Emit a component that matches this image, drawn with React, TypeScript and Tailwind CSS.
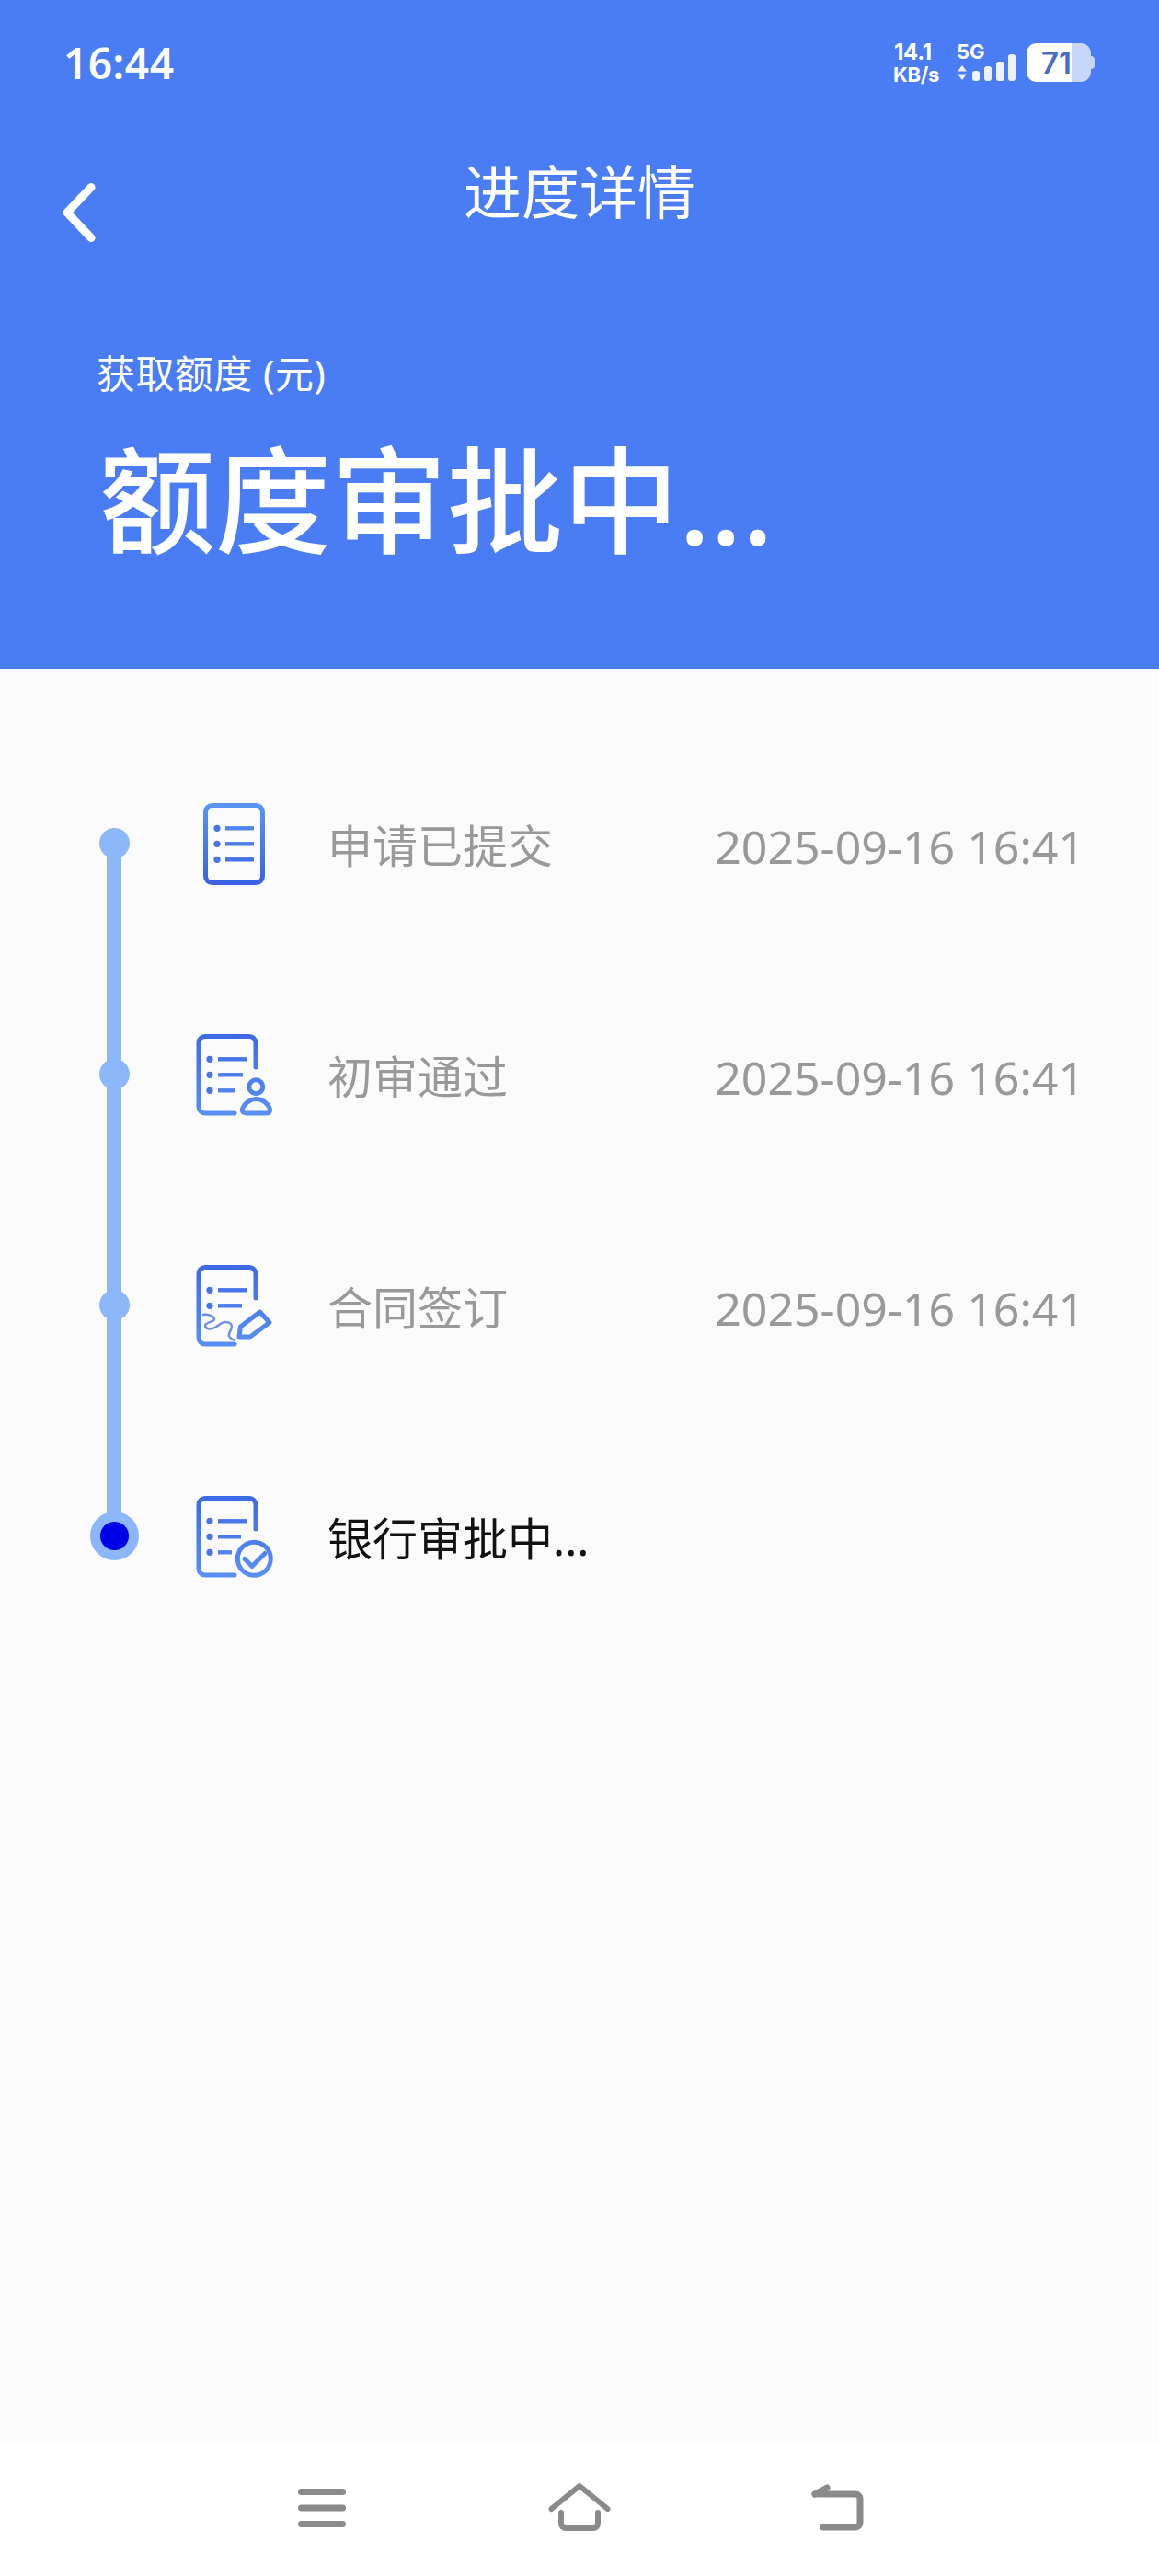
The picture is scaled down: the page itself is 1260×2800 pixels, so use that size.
const steps = [
  { name: "申请已提交", time: "2025-09-16 16:41", icon: "list" },
  { name: "初审通过", time: "2025-09-16 16:41", icon: "person" },
  { name: "合同签订", time: "2025-09-16 16:41", icon: "sign" },
  { name: "银行审批中...", time: "", icon: "check" },
];

function DocIcon({ kind }: { kind: string }) {
  const id = `doc-${kind}`;
  const flip = kind === "list";
  const stroke = `url(#${id})`;
  const lineEnds = kind === "person" ? [58, 53, 45] : kind === "sign" ? [57, 52] : kind === "check" ? [57, 51, 41] : [65, 65, 65];
  const dotX = flip ? 25 : 17;
  const lineX = flip ? 34 : 26;
  return (
    <svg width="90" height="90" viewBox="0 0 90 90" fill="none" className="shrink-0">
      <defs>
        <linearGradient id={id} gradientUnits="userSpaceOnUse" x1="0" y1="0" x2="0" y2="90">
          <stop offset="0" stopColor={flip ? "#5a96f2" : "#3d69e6"} />
          <stop offset="1" stopColor={flip ? "#3b62e2" : "#5a90f3"} />
        </linearGradient>
      </defs>
      {flip ? (
        <rect x="12.5" y="3.5" width="62" height="84" rx="7" stroke={stroke} strokeWidth="5" />
      ) : (
        <path d="M44 87H12a7 7 0 0 1-7-7V10.5a7 7 0 0 1 7-7h48a7 7 0 0 1 7 7V37" stroke={stroke} strokeWidth="5" strokeLinecap="round" />
      )}
      {lineEnds.map((end, i) => (
        <g key={i}>
          <circle cx={dotX} cy={28.3 + i * 17} r="3.6" fill="#4a74e6" />
          <path d={`M${lineX} ${28.3 + i * 17}H${end}`} stroke={stroke} strokeWidth="4.4" />
        </g>
      ))}
      {kind === "person" && (
        <>
          <circle cx="67.3" cy="58.3" r="7.5" stroke={stroke} strokeWidth="5" />
          <path d="M57 87h21.5c4 0 5-3 3.500-6-2.500-5-8-9.500-14.500-9.500S55.500 76 53 81c-1.500 3-.5 6 4 6Z" stroke={stroke} strokeWidth="5" strokeLinejoin="round" />
        </>
      )}
      {kind === "sign" && (
        <>
          <path d="M10 55c5-1 12 2 12 5 0 3-10 3-10 7 0 3 4 4 8 3 5-1 9-7 14-7 4 0 7 2 7 5 0 4-4 6-3 10 .5 2 4 4 6 5" stroke="#6f8fe0" strokeWidth="2.500" strokeLinecap="round" />
          <path d="M49 79l1.500-11 21-16L82 63.500 61 79Z" stroke={stroke} strokeWidth="5" strokeLinejoin="round" />
        </>
      )}
      {kind === "check" && (
        <>
          <circle cx="65.3" cy="69.300" r="18" stroke={stroke} strokeWidth="5" fill="#fbfbfb" />
          <path d="M55 69.500l8 8 14-14" stroke={stroke} strokeWidth="5" strokeLinecap="round" strokeLinejoin="round" />
        </>
      )}
    </svg>
  );
}

function StatusIcons() {
  return (
    <div className="flex items-start text-white font-bold">
      <div className="w-[69px] flex flex-col items-start text-[24px] leading-[24px] tracking-[-0.3px] mt-[-2px] ml-[-1px] font-['Inter',sans-serif]">
        <span className="pl-[1px]">14.1</span>
        <span className="text-[22px] leading-[22px] mt-[1px]">KB/s</span>
      </div>
      <div className="w-[76px] flex flex-col">
        <span className="text-[22px] leading-[20px] mt-[-1px] font-['Inter',sans-serif]">5G</span>
        <svg width="66" height="18" viewBox="0 0 66 18" className="mt-[5px] overflow-visible">
          <path d="M6 0l5 6.500H1ZM6 16l5-6.500H1Z" fill="#fff" opacity="0.9" />
          <rect x="17" y="6" width="8" height="11" rx="3" fill="#fff" opacity="0.9" />
          <rect x="30" y="1" width="8" height="16" rx="3" fill="#fff" opacity="0.9" />
          <rect x="43" y="-4" width="9" height="21" rx="3" fill="#fff" opacity="0.9" />
          <rect x="56" y="-12" width="8" height="29" rx="3" fill="#fff" opacity="0.9" />
        </svg>
      </div>
      <div className="flex items-center">
        <div className="flex w-[70px] h-[42px] rounded-[11px] overflow-hidden">
          <div className="w-[49px] bg-white text-[#4a6cc4] text-[33px] leading-[42px] text-right font-['Inter',sans-serif] font-semibold">71</div>
          <div className="flex-1 bg-[#c8d6fb]" />
        </div>
        <div className="w-[4px] h-[14px] bg-[#c8d6fb] rounded-r-[4px]" />
      </div>
    </div>
  );
}

export default function App() {
  return (
    <div className="min-h-[2800px] flex flex-col bg-[#fbfbfb] font-['Noto_Sans','Noto_Sans_CJK_SC',sans-serif]">
      <header className="h-[727px] shrink-0 bg-[#4a7cf4] text-white">
        <div className="flex items-start justify-between pt-[47px] pl-[69px] pr-[70px] h-[89px]">
          <span className="text-[46px] leading-[42px] font-semibold tracking-[0.5px]">16:44</span>
          <StatusIcons />
        </div>
        <div className="grid grid-cols-[1fr_auto_1fr] mt-[86px] pl-[66px]">
          <svg width="40" height="66" viewBox="0 0 40 66" fill="none" className="mt-[23px]">
            <path d="M33 5.500L7 33l26 27.500" stroke="#fff" strokeWidth="9" strokeLinecap="round" strokeLinejoin="round" />
          </svg>
          <h1 className="text-[63px] leading-[66px] ml-[-66px] font-normal">进度详情</h1>
        </div>
        <p className="mt-[117px] pl-[105px] text-[42px] leading-[50px] tracking-[0.4px]">获取额度 (元)</p>
        <p className="mt-[37px] pl-[108px] text-[126px] leading-[150px] font-medium">额度审批中...</p>
      </header>
      <main className="flex-1 flex items-start pt-[145px] pl-[98px] pr-[81px]">
        <div className="w-[53px] shrink-0 flex flex-col items-center pt-[28px]">
          {steps.map((s, i) => {
            const last = i === steps.length - 1;
            return last ? (
              <div key={s.name} className="w-[53px] h-[53px] rounded-full bg-[#8cb8fb] flex items-center justify-center">
                <div className="w-[31px] h-[31px] rounded-full bg-[#0000e6]" />
              </div>
            ) : (
              <div key={s.name} className="flex flex-col items-center">
                <div className="w-[33px] h-[33px] rounded-full bg-[#8cb8fb]" />
                <div className={i === steps.length - 2 ? "w-[16px] h-[224px] -my-[8px] mr-[1px] bg-[#8cb8fb]" : "w-[16px] h-[234px] -my-[8px] mr-[1px] bg-[#8cb8fb]"} />
              </div>
            );
          })}
        </div>
        <div className="flex-1 flex flex-col gap-[161px] pl-[60px]">
          {steps.map((s, i) => (
            <div key={s.name} className="h-[90px] flex items-center">
              <DocIcon kind={s.icon} />
              <span className={i === 3 ? "ml-[55px] pt-[6px] text-[49px] text-[#111]" : "ml-[55px] pt-[6px] text-[49px] text-[#999]"}>{s.name}</span>
              <span className="ml-auto pt-[6px] text-[50px] text-[#999]">{s.time}</span>
            </div>
          ))}
        </div>
      </main>
      <footer className="h-[147px] shrink-0 bg-white flex justify-center pt-[45px]">
        <div className="w-[280px] flex justify-center">
          <svg width="56" height="56" viewBox="0 0 56 56" fill="none">
            <path d="M5.500 10.500h45M5.500 28h45M5.500 45.500h45" stroke="#8a8a8a" strokeWidth="7" strokeLinecap="round" />
          </svg>
        </div>
        <div className="w-[280px] flex justify-center">
          <svg width="70" height="56" viewBox="0 0 70 56" fill="none">
            <path d="M4.500 29L35 4l30.500 25" stroke="#8a8a8a" strokeWidth="6" strokeLinecap="round" strokeLinejoin="round" />
            <path d="M15 33v12a5 5 0 0 0 5 5h30a5 5 0 0 0 5-5V33" stroke="#8a8a8a" strokeWidth="6" strokeLinecap="round" />
          </svg>
        </div>
        <div className="w-[280px] flex justify-center">
          <svg width="60" height="56" viewBox="0 0 60 56" fill="none">
            <path d="M15 49h35a5 5 0 0 0 5-5V18a5 5 0 0 0-5-5H6" stroke="#8a8a8a" strokeWidth="7" strokeLinecap="round" />
            <path d="M6 13l13-7" stroke="#8a8a8a" strokeWidth="7" strokeLinecap="round" />
          </svg>
        </div>
      </footer>
    </div>
  );
}
